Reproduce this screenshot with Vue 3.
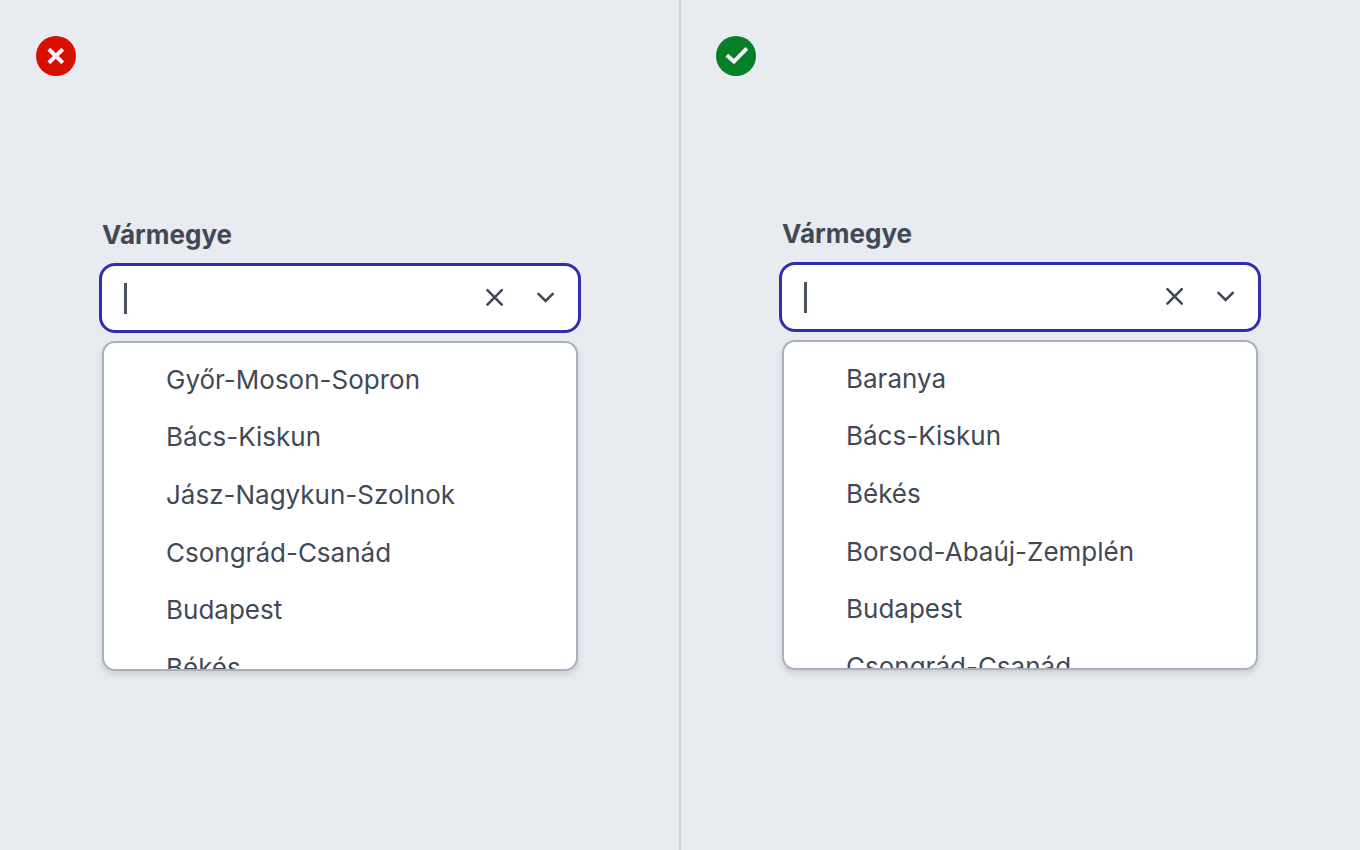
<script setup>
const panes = [
  {
    id: 'unsorted',
    good: false,
    options: ['Győr-Moson-Sopron', 'Bács-Kiskun', 'Jász-Nagykun-Szolnok', 'Csongrád-Csanád', 'Budapest', 'Békés'],
  },
  {
    id: 'sorted',
    good: true,
    options: ['Baranya', 'Bács-Kiskun', 'Békés', 'Borsod-Abaúj-Zemplén', 'Budapest', 'Csongrád-Csanád'],
  },
]
</script>

<template>
  <main class="comparison">
    <section v-for="pane in panes" :key="pane.id" class="pane" :class="pane.id">
      <svg class="badge" viewBox="0 0 40 40" aria-hidden="true">
        <circle cx="20" cy="20" r="20" :fill="pane.good ? '#067f26' : '#d60f00'" />
        <path v-if="pane.good" d="M10.8 19.2 18 25.6 30.8 12.4" />
        <path v-else d="M12.8 13.2 26.8 26.8M26.8 13.2 12.8 26.8" />
      </svg>

      <div class="combobox">
        <label class="label" :for="pane.id">Vármegye</label>
        <div class="field">
          <span class="caret"></span>
          <input :id="pane.id" class="input" type="text" role="combobox" aria-expanded="true" :aria-controls="pane.id + '-list'" autocomplete="off" />
          <button class="action" type="button" aria-label="Törlés">
            <svg viewBox="0 0 24 24"><path d="M5.4 4.2 19.8 18.6M19.8 4.2 5.4 18.6" /></svg>
          </button>
          <button class="action" type="button" aria-label="Lista">
            <svg viewBox="0 0 24 24"><path d="M5.4 7.8 12.6 15 19.8 7.8" /></svg>
          </button>
        </div>
        <div class="popup">
          <ul :id="pane.id + '-list'" class="options" role="listbox">
            <li v-for="option in pane.options" :key="option" class="option" role="option">{{ option }}</li>
          </ul>
        </div>
      </div>
    </section>
  </main>
</template>

<style>
body {
  margin: 0;
  background: #e8ebf0;
}
</style>

<style scoped>
.comparison {
  display: grid;
  grid-template-columns: 1fr 1fr;
  min-height: 100vh;
  background: #e8ebf0;
  color: #424956;
  font-family: Inter, "Liberation Sans", sans-serif;
  font-size: 26px;
  line-height: 32px;
}
.pane {
  position: relative;
  box-sizing: border-box;
  padding: 36px;
}
.pane + .pane::before {
  content: "";
  position: absolute;
  top: 0;
  bottom: 0;
  left: -1px;
  width: 2px;
  background: #cbcfd6;
}
.badge {
  display: block;
  width: 40px;
  height: 40px;
}
.badge path {
  fill: none;
  stroke: #f0f2f5;
  stroke-width: 4;
}
.combobox {
  max-width: 482px;
  margin: 143px auto 0;
}
.sorted .combobox {
  margin-top: 142px;
}
.label {
  display: block;
  padding: 0 3px;
  font-weight: 700;
}
.field {
  display: flex;
  align-items: center;
  box-sizing: border-box;
  height: 70px;
  margin-top: 12px;
  padding: 0 20px 0 22px;
  border: 3px solid #302eae;
  border-radius: 16px;
  background: #fff;
}
.caret {
  width: 3px;
  height: 31px;
  background: #4b5361;
}
.input {
  flex: 1;
  min-width: 0;
  padding: 0;
  border: 0;
  outline: 0;
  background: none;
  color: inherit;
  font: inherit;
}
.action {
  display: grid;
  place-items: center;
  width: 26px;
  height: 26px;
  padding: 0;
  border: 0;
  background: none;
}
.action + .action {
  margin-left: 25px;
}
.action svg {
  width: 24px;
  height: 24px;
  fill: none;
  stroke: #424956;
  stroke-width: 2.6;
  stroke-linecap: round;
}
.popup {
  box-sizing: border-box;
  height: 330px;
  margin: 8px 3px 0;
  overflow: hidden;
  border: 2px solid #aab0bb;
  border-radius: 13px;
  background: #fff;
  box-shadow: 0 4px 6px rgba(40, 50, 70, 0.14);
}
.options {
  display: grid;
  grid-auto-rows: 1fr;
  height: 346px;
  margin: 0;
  padding: 8px 0 0;
  list-style: none;
}
.option {
  display: flex;
  align-items: center;
  padding: 0 62px;
  font-weight: 400;
}
</style>
